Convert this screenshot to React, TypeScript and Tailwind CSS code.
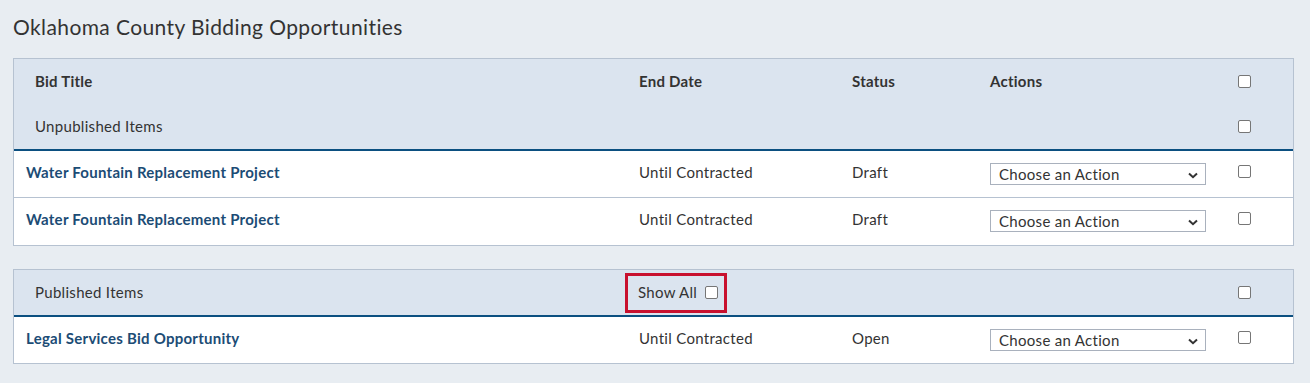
import React from "react";

const font = { fontFamily: "Lato, 'Open Sans', sans-serif" };

function Check() {
  return (
    <span className="inline-block w-[13px] h-[13px] rounded-[2px] border border-[#767676] bg-white" />
  );
}

function ActionSelect() {
  return (
    <div className="relative w-[216px] h-[22px] border border-[#a9b1bd] bg-white flex items-center pl-[8px] text-[15px] tracking-[0.3px] text-[#333]">
      <span>Choose an Action</span>
      <svg className="absolute right-[7px] top-[8px]" width="10" height="7" viewBox="0 0 10 7">
        <path d="M1 1.5 L5 5.2 L9 1.5" fill="none" stroke="#333" strokeWidth="2" />
      </svg>
    </div>
  );
}

function DataRow({ title, status, last, short }: { title: string; status: string; last?: boolean; short?: boolean }) {
  return (
    <div className={`flex ${short ? "h-[46px]" : "h-[47px]"} bg-white ${last ? "" : "border-b border-[#b6c2d1]"}`}>
      <div className="w-[613px] pl-[12px] pt-[10px] text-[15px] font-bold tracking-[0.25px] text-[#1c4c75]">{title}</div>
      <div className="w-[213px] pl-[12px] pt-[10px] text-[15px] tracking-[0.3px] text-[#333]">Until Contracted</div>
      <div className="w-[138px] pl-[12px] pt-[10px] text-[15px] tracking-[0.3px] text-[#333]">{status}</div>
      <div className="w-[248px] pl-[12px] pt-[12px]">
        <ActionSelect />
      </div>
      <div className="w-[67px] pl-[12px] pt-[14px] flex items-start">
        <Check />
      </div>
    </div>
  );
}

export default function App() {
  return (
    <div className="w-[1310px] h-[383px] bg-[#e8edf2] pt-[13px] px-[13px] text-[#333]" style={font}>
      <h1 className="text-[21px] leading-[28px] tracking-[0.4px] text-[#333]">Oklahoma County Bidding Opportunities</h1>

      <div className="mt-[17px] w-[1281px] border border-[#b6c2d1]">
        <div className="bg-[#dbe4ef]">
          <div className="flex h-[45px] items-center">
            <div className="w-[613px] pl-[21px] text-[15px] font-bold tracking-[0.25px] text-[#333]">Bid Title</div>
            <div className="w-[213px] pl-[12px] text-[15px] font-bold tracking-[0.25px] text-[#333]">End Date</div>
            <div className="w-[138px] pl-[12px] text-[15px] font-bold tracking-[0.25px] text-[#333]">Status</div>
            <div className="w-[248px] pl-[12px] text-[15px] font-bold tracking-[0.25px] text-[#333]">Actions</div>
            <div className="w-[67px] pl-[12px] flex"><Check /></div>
          </div>
          <div className="flex h-[45px] items-center">
            <div className="w-[1212px] pl-[21px] text-[15px] tracking-[0.3px] text-[#333]">Unpublished Items</div>
            <div className="w-[67px] pl-[12px] flex"><Check /></div>
          </div>
        </div>
        <div className="h-[2px] bg-[#0b4f80]" />
        <DataRow title="Water Fountain Replacement Project" status="Draft" />
        <DataRow title="Water Fountain Replacement Project" status="Draft" last />
      </div>

      <div className="mt-[23px] w-[1281px] border border-[#b6c2d1]">
        <div className="bg-[#dbe4ef] flex h-[45px] items-center">
          <div className="w-[611px] pl-[21px] text-[15px] tracking-[0.3px] text-[#333]">Published Items</div>
          <div className="w-[215px]">
            <div className="w-[102px] h-[40px] border-[3px] border-[#c8102e] flex items-center pl-[10px] gap-[8px] text-[15px] tracking-[0.3px] text-[#333]">
              <span>Show All</span>
              <Check />
            </div>
          </div>
          <div className="w-[386px]" />
          <div className="w-[67px] pl-[12px] flex"><Check /></div>
        </div>
        <div className="h-[2px] bg-[#0b4f80]" />
        <DataRow title="Legal Services Bid Opportunity" status="Open" last short />
      </div>
    </div>
  );
}
